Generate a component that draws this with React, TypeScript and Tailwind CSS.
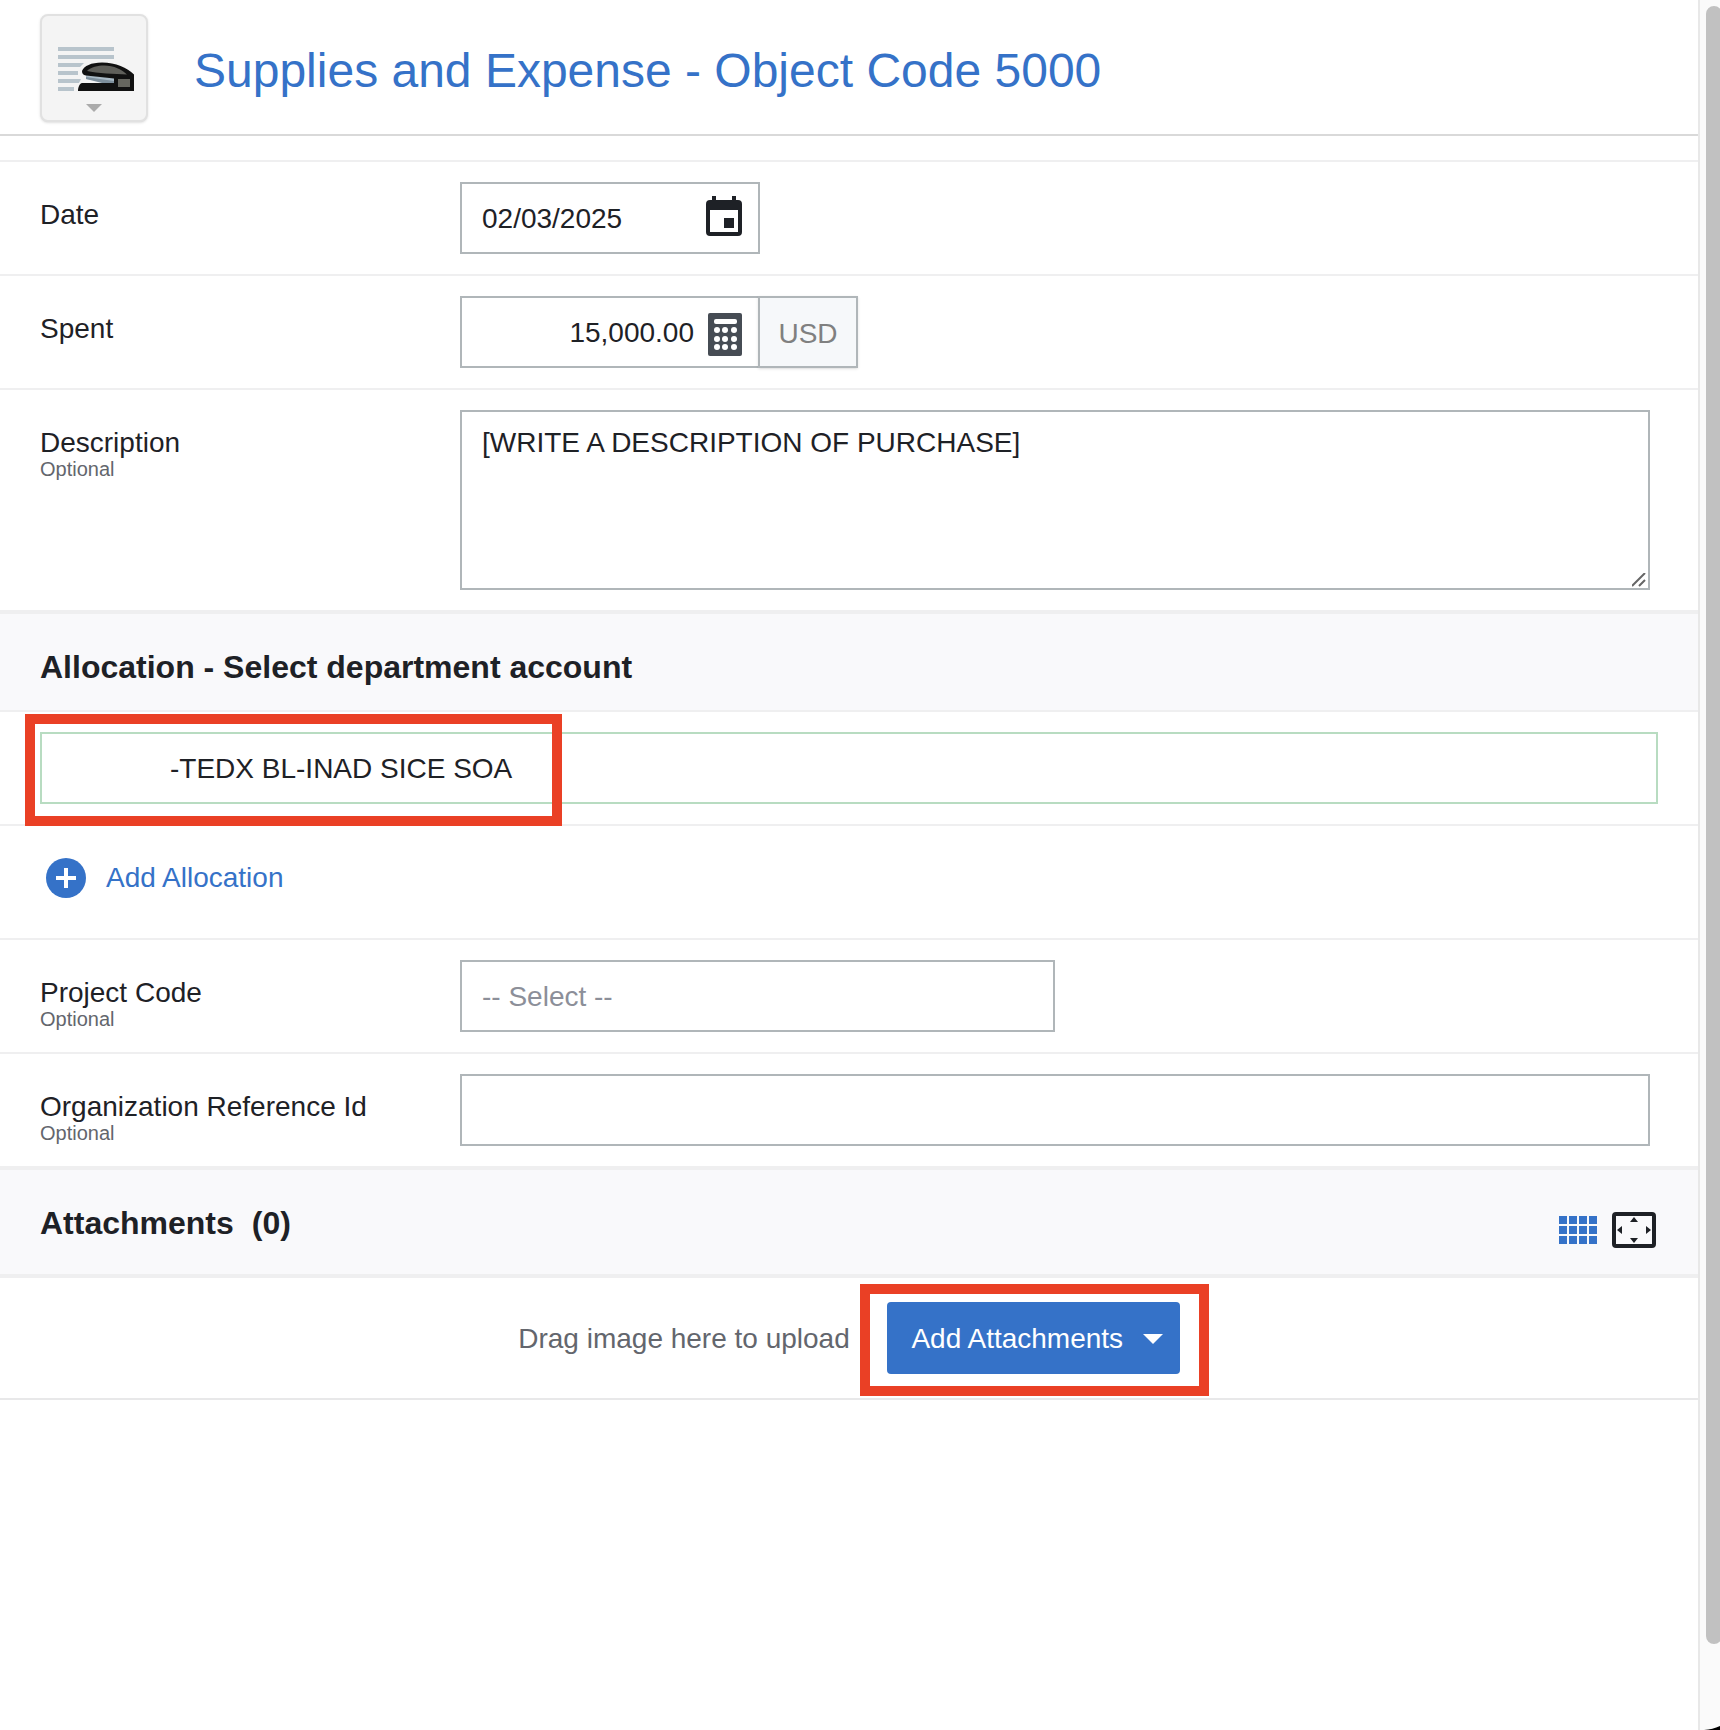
import type { ReactNode } from "react";

const box = "border-2 border-[#b0b6b9] bg-white text-[28px] text-[#1e2126] outline-none";

function StaplerIcon() {
  return (
    <svg width="80" height="50" viewBox="54 41 80 50" aria-hidden="true">
      <g fill="#b8c4cc">
        <rect x="58" y="46" width="56" height="4" />
        <rect x="58" y="54" width="56" height="4" />
        <path d="M58 62h26l-4 4H58z" />
        <rect x="58" y="70" width="20" height="4" />
        <path d="M58 78h23l-2 4H58z" />
        <rect x="58" y="86" width="16" height="4" />
      </g>
      <path
        d="M78 90c0-4 2-8 5-8l3-2v-5c-3-1-4-2-4-4 2-5 9-9.500 20-9.500 14 0 25 5 32 12V90z"
        fill="#f4f4f4"
        stroke="#f4f4f4"
        strokeWidth="3"
      />
      <path d="M86 74l28 3v5l-28-4z" fill="#a9bac6" />
      <path d="M86 76l28 4v2h-12l-16-4z" fill="#7d8f9c" />
      <path
        d="M78 90c0-4 2-8 4-8h32v-4.500L86 74.500c-3-.5-4-2-4-4.500 2-5 9-8.500 20-8.500 14 0 25 5 32 12V90z"
        fill="#111"
      />
      <path d="M87 70c4-4 11-5.500 17-5.500 10 0 18 4 23 9-12-.5-30-1-40-3.500z" fill="#5f5f5a" />
      <rect x="118" y="78" width="12" height="8" fill="#66665f" />
    </svg>
  );
}

function CalendarIcon() {
  return (
    <svg width="36" height="40" viewBox="0 0 36 40" aria-hidden="true">
      <path
        fill="#1e2126"
        fillRule="evenodd"
        d="M6 0h4v4h16V0h4v4h2a4 4 0 0 1 4 4v28a4 4 0 0 1-4 4H4a4 4 0 0 1-4-4V8a4 4 0 0 1 4-4h2zM4 14v22h28V14zM18 22h10v10H18z"
      />
    </svg>
  );
}

function CalculatorIcon() {
  return (
    <svg width="34" height="43" viewBox="0 0 34 43" aria-hidden="true">
      <rect width="34" height="43" rx="2" fill="#464c54" />
      <rect x="6" y="6" width="23" height="5" rx="2" fill="#fff" />
      {[17, 26, 34].map((y) =>
        [9, 17, 26].map((x) => <circle key={`${x}-${y}`} cx={x} cy={y} r="3" fill="#fff" />)
      )}
    </svg>
  );
}

function GridIcon() {
  return (
    <svg width="38" height="28" viewBox="0 0 38 28" fill="#3572c8" aria-hidden="true">
      {[0, 10, 20].map((y) =>
        [0, 10, 20, 30].map((x) => <rect key={`${x}-${y}`} x={x} y={y} width="8" height="8" />)
      )}
    </svg>
  );
}

function ExpandIcon() {
  return (
    <svg width="44" height="36" viewBox="0 0 44 36" fill="#1e2126" aria-hidden="true">
      <rect x="2" y="2" width="40" height="32" rx="2" fill="none" stroke="#1e2126" strokeWidth="4" />
      <path d="M22 5l4 5h-8zM22 31l4-5h-8zM5 18l5-4v8zM39 18l-5-4v8z" />
    </svg>
  );
}

function Field({
  id,
  label,
  optional,
  last,
  children,
}: {
  id: string;
  label: string;
  optional?: boolean;
  last?: boolean;
  children: ReactNode;
}) {
  return (
    <div
      className={`flex border-[#efeff0] py-5 pr-12 pl-10 ${last ? "border-b-4" : "border-b-2"}`}
    >
      <label htmlFor={id} className="flex w-[420px] shrink-0 flex-col pt-[19px]">
        <span className="text-[28px] leading-7">{label}</span>
        {optional && <span className="text-xl leading-6 text-[#63666d]">Optional</span>}
      </label>
      <div className="flex min-w-0 flex-1">{children}</div>
    </div>
  );
}

export default function App() {
  return (
    <div className="relative flex min-h-screen overflow-hidden bg-white font-['Liberation_Sans',Arial,sans-serif] text-[#1e2126]">
      <main className="min-w-0 flex-1 border-r-2 border-[#e8e8e8]">
        <header className="flex items-center gap-[46px] border-b-2 border-[#d9d9d9] px-10 pt-3.5 pb-3">
          <button
            type="button"
            aria-label="Change expense type"
            className="flex size-[108px] shrink-0 flex-col items-center gap-3 rounded-lg border-2 border-[#e1e1e1] bg-[#f4f4f4] pt-[26px] shadow-sm"
          >
            <StaplerIcon />
            <svg width="16" height="8" viewBox="0 0 16 8" fill="#ababab" aria-hidden="true">
              <path d="M0 0h16L8 8z" />
            </svg>
          </button>
          <h1 className="pt-1.5 text-5xl text-[#3572c8]">Supplies and Expense - Object Code 5000</h1>
        </header>
        <div className="h-[26px] border-b-2 border-[#efeff0]" />

        <form>
          <Field id="date" label="Date">
            <div className={`flex h-[72px] w-[300px] items-center pr-4 ${box}`}>
              <input id="date" type="text" defaultValue="02/03/2025" className="w-full min-w-0 flex-1 pt-0.5 pl-5 outline-none" />
              <button type="button" aria-label="Open calendar" className="pb-1">
                <CalendarIcon />
              </button>
            </div>
          </Field>

          <Field id="spent" label="Spent">
            <div className={`flex h-[72px] w-[300px] items-center gap-3.5 pr-4 ${box}`}>
              <input id="spent" type="text" defaultValue="15,000.00" className="w-full min-w-0 flex-1 pt-0.5 text-right outline-none" />
              <button type="button" aria-label="Open calculator" className="pt-1">
                <CalculatorIcon />
              </button>
            </div>
            <span className="-ml-0.5 flex h-[72px] w-[100px] items-center justify-center border-2 border-[#b0b6b9] bg-[#f6f8fa] pt-1 text-[28px] text-[#808080] shadow-sm">
              USD
            </span>
          </Field>

          <Field id="description" label="Description" optional last>
            <textarea
              id="description"
              defaultValue="[WRITE A DESCRIPTION OF PURCHASE]"
              className={`h-[180px] w-full resize-none px-5 pt-[15px] leading-8 ${box}`}
            />
            <svg className="relative -ml-[18px] mb-[3px] shrink-0 self-end" width="14" height="14" viewBox="0 0 14 14" stroke="#666" strokeWidth="2" aria-hidden="true">
              <path d="M0 13L13 0M7 13l6-6" />
            </svg>
            <span className="w-1 shrink-0 -mr-1" />
          </Field>

          <section>
            <h2 className="border-b-2 border-[#efeff0] bg-[#f9f9fb] px-10 pt-[33px] pb-[23px] text-[32px] leading-10 font-bold">
              Allocation - Select department account
            </h2>
            <div className="relative border-b-2 border-[#efeff0] px-10 py-5">
              <input
                type="text"
                aria-label="Allocation"
                defaultValue="-TEDX BL-INAD SICE SOA"
                className="block h-[72px] w-full border-2 border-[#b8dcc1] pt-0.5 pl-32 text-[28px] outline-none"
              />
              <div className="pointer-events-none absolute top-0.5 left-[25px] h-28 w-[537px] border-10 border-[#ea4025]" />
            </div>
            <div className="border-b-2 border-[#efeff0] pt-8 pb-10 pl-[46px]">
              <button type="button" className="flex items-center gap-5 text-[28px] leading-10 text-[#3572c8]">
                <svg width="40" height="40" viewBox="0 0 40 40" aria-hidden="true">
                  <circle cx="20" cy="20" r="20" fill="#3572c8" />
                  <path d="M20 10v20M10 20h20" stroke="#fff" strokeWidth="4" />
                </svg>
                Add Allocation
              </button>
            </div>
          </section>

          <Field id="project" label="Project Code" optional>
            <select id="project" defaultValue="" className={`h-[72px] w-1/2 appearance-none px-5 pt-0.5 ${box} text-[#8c8f99]`}>
              <option value="">-- Select --</option>
            </select>
          </Field>

          <Field id="reference" label="Organization Reference Id" optional last>
            <input id="reference" type="text" className={`h-[72px] w-full px-5 ${box}`} />
          </Field>

          <section>
            <div className="flex items-start justify-between border-b-4 border-[#efeff0] bg-[#f9f9fb] pt-[33px] pr-[42px] pb-6 pl-10">
              <h2 className="flex gap-[18px] text-[32px] leading-10 font-bold">
                <span>Attachments</span>
                <span>(0)</span>
              </h2>
              <div className="flex items-center gap-[15px] pt-[7px]">
                <button type="button" aria-label="Grid view" className="flex h-10 items-center">
                  <GridIcon />
                </button>
                <button type="button" aria-label="Expand" className="flex h-10 items-center">
                  <ExpandIcon />
                </button>
              </div>
            </div>
            <div className="flex items-center justify-center gap-[37px] border-b-2 border-[#e8e8e9] py-6">
              <span className="pt-0.5 text-[28px] text-[#63666d]">Drag image here to upload</span>
              <div className="relative">
                <button
                  type="button"
                  className="flex h-[72px] w-[293px] items-center justify-center gap-5 rounded bg-[#3572c8] pt-0.5 pl-2 text-[28px] text-white"
                >
                  Add Attachments
                  <svg width="20" height="10" viewBox="0 0 20 10" fill="#fff" aria-hidden="true">
                    <path d="M0 0h20L10 10z" />
                  </svg>
                </button>
                <div className="pointer-events-none absolute -top-[18px] -right-[29px] -bottom-[22px] -left-[27px] border-10 border-[#ea4025]" />
              </div>
            </div>
          </section>
        </form>
      </main>

      <div className="flex w-5 shrink-0 flex-col overflow-hidden bg-[#fafafa] pt-1.5 pb-[86px] pl-1.5">
        <div className="w-4 flex-1 rounded-full bg-[#c1c1c1]" />
      </div>
      <svg className="absolute right-0 bottom-0" width="16" height="4" viewBox="0 0 16 4" aria-hidden="true">
        <path d="M0 4c6-.5 11-1.500 16-4v4z" fill="#000" />
      </svg>
    </div>
  );
}
